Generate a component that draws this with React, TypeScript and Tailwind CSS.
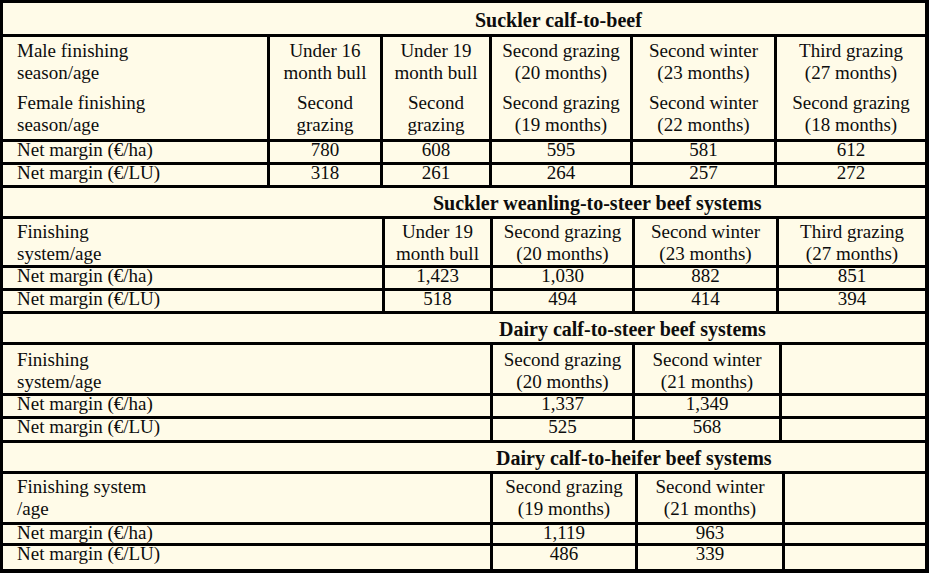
import React from "react";

const cellL = "border-l-[3px] border-black";

function HCell({ a, b }: { a: string; b: string }) {
  return (
    <div className={`${cellL} flex flex-col items-center justify-center text-center leading-[22px] pt-[2px]`}>
      <span>{a}</span>
      <span>{b}</span>
    </div>
  );
}

function NCell({ v }: { v: string }) {
  return <div className={`${cellL} flex items-start justify-center leading-[15px]`}>{v}</div>;
}

function LCell({ t }: { t: string }) {
  return <div className="flex items-start pl-[14px] leading-[15px]">{t}</div>;
}

export default function App() {
  return (
    <div className="w-[930px] h-[576px] bg-white">
      <div className="w-[929px] border-t-[3px] border-l-[3px] border-r-[4px] border-b-[4px] border-black bg-[#fffbe8] text-[19px] text-[#0d0d0d] font-['Liberation_Serif',serif]">
        {/* Section 1 */}
        <div className="h-[31px] flex items-center pl-[472px] pt-[3px] font-bold text-[20px]">Suckler calf-to-beef</div>
        <div className="grid grid-cols-[264px_113px_109px_141px_144px_1fr] h-[105px] border-t-[3px] border-black">
          <div className="flex flex-col justify-start pl-[14px] pt-[3px] gap-[8px] leading-[22px]">
            <div className="flex flex-col">
              <span>Male finishing</span>
              <span>season/age</span>
            </div>
            <div className="flex flex-col">
              <span>Female finishing</span>
              <span>season/age</span>
            </div>
          </div>
          {[
            ["Under 16", "month bull", "Second", "grazing"],
            ["Under 19", "month bull", "Second", "grazing"],
            ["Second grazing", "(20 months)", "Second grazing", "(19 months)"],
            ["Second winter", "(23 months)", "Second winter", "(22 months)"],
            ["Third grazing", "(27 months)", "Second grazing", "(18 months)"],
          ].map((c, i) => (
            <div key={i} className={`${cellL} flex flex-col items-center justify-start text-center pt-[3px] gap-[8px] leading-[22px]`}>
              <div className="flex flex-col">
                <span>{c[0]}</span>
                <span>{c[1]}</span>
              </div>
              <div className="flex flex-col">
                <span>{c[2]}</span>
                <span>{c[3]}</span>
              </div>
            </div>
          ))}
        </div>
        <div className="grid grid-cols-[264px_113px_109px_141px_144px_1fr] h-[23px] border-t-[3px] border-black">
          <LCell t="Net margin (€/ha)" />
          <NCell v="780" />
          <NCell v="608" />
          <NCell v="595" />
          <NCell v="581" />
          <NCell v="612" />
        </div>
        <div className="grid grid-cols-[264px_113px_109px_141px_144px_1fr] h-[23px] border-t-[3px] border-black">
          <LCell t="Net margin (€/LU)" />
          <NCell v="318" />
          <NCell v="261" />
          <NCell v="264" />
          <NCell v="257" />
          <NCell v="272" />
        </div>

        {/* Section 2 */}
        <div className="h-[31px] flex items-center pl-[430px] pt-[1px] font-bold text-[20px] border-t-[3px] border-black">Suckler weanling-to-steer beef systems</div>
        <div className="grid grid-cols-[379px_108px_142px_144px_1fr] h-[49px] border-t-[3px] border-black">
          <div className="flex flex-col justify-center pl-[14px] pt-[2px] leading-[22px]">
            <span>Finishing</span>
            <span>system/age</span>
          </div>
          <HCell a="Under 19" b="month bull" />
          <HCell a="Second grazing" b="(20 months)" />
          <HCell a="Second winter" b="(23 months)" />
          <HCell a="Third grazing" b="(27 months)" />
        </div>
        <div className="grid grid-cols-[379px_108px_142px_144px_1fr] h-[23px] border-t-[3px] border-black">
          <LCell t="Net margin (€/ha)" />
          <NCell v="1,423" />
          <NCell v="1,030" />
          <NCell v="882" />
          <NCell v="851" />
        </div>
        <div className="grid grid-cols-[379px_108px_142px_144px_1fr] h-[23px] border-t-[3px] border-black">
          <LCell t="Net margin (€/LU)" />
          <NCell v="518" />
          <NCell v="494" />
          <NCell v="414" />
          <NCell v="394" />
        </div>

        {/* Section 3 */}
        <div className="h-[31px] flex items-center pl-[496px] pt-[1px] font-bold text-[20px] border-t-[3px] border-black">Dairy calf-to-steer beef systems</div>
        <div className="grid grid-cols-[487px_142px_147px_1fr] h-[51px] border-t-[3px] border-black">
          <div className="flex flex-col justify-center pl-[14px] pt-[4px] leading-[22px]">
            <span>Finishing</span>
            <span>system/age</span>
          </div>
          <div className={`${cellL} flex flex-col items-center justify-center text-center leading-[22px] pt-[4px]`}>
            <span>Second grazing</span>
            <span>(20 months)</span>
          </div>
          <div className={`${cellL} flex flex-col items-center justify-center text-center leading-[22px] pt-[4px]`}>
            <span>Second winter</span>
            <span>(21 months)</span>
          </div>
          <div className={cellL} />
        </div>
        <div className="grid grid-cols-[487px_142px_147px_1fr] h-[23px] border-t-[3px] border-black">
          <LCell t="Net margin (€/ha)" />
          <NCell v="1,337" />
          <NCell v="1,349" />
          <div className={cellL} />
        </div>
        <div className="grid grid-cols-[487px_142px_147px_1fr] h-[24px] border-t-[3px] border-black">
          <LCell t="Net margin (€/LU)" />
          <NCell v="525" />
          <NCell v="568" />
          <div className={cellL} />
        </div>

        {/* Section 4 */}
        <div className="h-[31px] flex items-center pl-[493px] pt-[1px] font-bold text-[20px] border-t-[3px] border-black">Dairy calf-to-heifer beef systems</div>
        <div className="grid grid-cols-[487px_145px_147px_1fr] h-[51px] border-t-[3px] border-black">
          <div className="flex flex-col justify-center pl-[14px] leading-[22px]">
            <span>Finishing system</span>
            <span>/age</span>
          </div>
          <div className={`${cellL} flex flex-col items-center justify-center text-center leading-[22px]`}>
            <span>Second grazing</span>
            <span>(19 months)</span>
          </div>
          <div className={`${cellL} flex flex-col items-center justify-center text-center leading-[22px]`}>
            <span>Second winter</span>
            <span>(21 months)</span>
          </div>
          <div className={cellL} />
        </div>
        <div className="grid grid-cols-[487px_145px_147px_1fr] h-[21px] border-t-[3px] border-black">
          <LCell t="Net margin (€/ha)" />
          <NCell v="1,119" />
          <NCell v="963" />
          <div className={cellL} />
        </div>
        <div className="grid grid-cols-[487px_145px_147px_1fr] h-[26px] border-t-[3px] border-black">
          <LCell t="Net margin (€/LU)" />
          <NCell v="486" />
          <NCell v="339" />
          <div className={cellL} />
        </div>
      </div>
    </div>
  );
}
